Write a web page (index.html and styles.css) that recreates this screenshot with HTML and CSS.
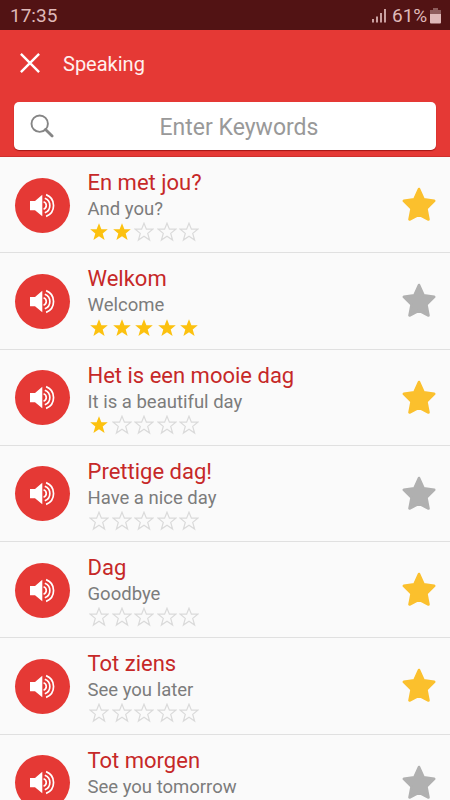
FILE: index.html
```html
<!DOCTYPE html>
<html lang="nl">
<head>
<meta charset="utf-8">
<title>Speaking</title>
<link rel="stylesheet" href="styles.css">
</head>
<body>
<svg class="defs" aria-hidden="true">
  <symbol id="speaker" viewBox="0 0 55 55">
    <path d="M15 23h5l7.3-6.2v21.4L20 32.3h-5z" fill="#fff"/>
    <g fill="none" stroke="#fff" stroke-width="1.7">
      <path d="M28.6 23.8a3.9 3.9 0 0 1 0 7.4"/>
      <path d="M29.8 20.2a7.8 7.8 0 0 1 0 14.6"/>
      <path d="M31.1 16.6a11.7 11.7 0 0 1 0 21.8"/>
    </g>
  </symbol>
  <symbol id="star" viewBox="0 0 20 20">
    <path d="M10 1.2l2.4 6h6.4l-5.1 4.2 1.9 6.7L10 14.2l-5.6 3.9 1.9-6.7L1.2 7.2h6.4z"/>
  </symbol>
  <symbol id="fav" viewBox="0 0 36 36">
    <path d="M18 3l4.6 10.4 10.6 1.4-7.8 7.7 2.1 11L18 28.5l-9.5 5 2.1-11-7.8-7.7 10.6-1.4z" stroke="currentColor" stroke-width="2.6" stroke-linejoin="round" fill="currentColor"/>
  </symbol>
</svg>
<div class="status">
  <span class="time">17:35</span>
  <svg class="signal" viewBox="0 0 15 15"><path d="M1 11v3.5M5 8.5v6M9 5v9.5M13 1v13.5" stroke="currentColor" stroke-width="1.7"/></svg>
  <span class="percent">61%</span>
  <svg class="battery" viewBox="0 0 11 16"><path d="M3 0h5v2h3v4H0V2h3z" fill="#8d5c5c"/><path d="M0 6h11v8.5a1 1 0 0 1-1 1H1a1 1 0 0 1-1-1z" fill="currentColor"/></svg>
</div>
<header class="header">
  <div class="bar">
    <svg class="close" viewBox="0 0 20 20"><path d="M.9.9l18.2 18.2M19.1.9L.9 19.1" stroke="#fff" stroke-width="2.4"/></svg>
    <h1>Speaking</h1>
  </div>
  <div class="search">
    <svg class="lens" viewBox="0 0 24 24"><circle cx="9.7" cy="9.7" r="8.2" fill="none" stroke="#858585" stroke-width="1.9"/><path d="M15.5 15.5l6.6 6.6" stroke="#858585" stroke-width="2.8" stroke-linecap="round"/></svg>
    <span class="placeholder">Enter Keywords</span>
  </div>
</header>
<main class="list" id="list"></main>
<script src="app.js"></script>
</body>
</html>
```
FILE: styles.css
```css
* { box-sizing: border-box; }
body {
  margin: 0;
  width: 450px;
  height: 800px;
  overflow: hidden;
  background: #fafafa;
  font-family: Roboto, "Liberation Sans", sans-serif;
}
svg { display: block; flex: none; }
.defs { position: absolute; width: 0; height: 0; }
.status {
  display: flex;
  align-items: center;
  height: 30px;
  padding: 1px 9px 0 10px;
  background: #521314;
  color: #dfb9b9;
}
.time { font-size: 19px; flex: 1; }
.signal { width: 15px; height: 15px; margin-right: 5px; }
.percent { font-size: 19px; width: 38px; }
.battery { width: 11px; height: 16px; }
.header {
  height: 127px;
  padding: 0 14px;
  background: #e53935;
  border-bottom: 1px solid #cf302e;
}
.bar { display: flex; align-items: center; height: 72px; padding: 0 0 7px 6px; }
.close { width: 20px; height: 20px; }
h1 { margin: 2px 0 0 23px; font-size: 20px; font-weight: 400; color: #fff0ef; }
.search {
  display: flex;
  align-items: center;
  height: 48px;
  padding-left: 16px;
  border-radius: 5px;
  background: #fff;
  box-shadow: 0 1px 1px rgba(120, 0, 0, .6);
}
.lens { width: 24px; height: 24px; }
.placeholder { flex: 1; margin: 2px 13px 0 0; padding-left: 1px; text-align: center; font-size: 23px; color: #999; }
.row {
  display: flex;
  height: 96.3px;
  padding: 0 15px;
  border-bottom: 1px solid #e0e0e0;
}
.play { width: 55px; height: 55px; margin-top: 20.5px; border-radius: 50%; background: #e53935; }
.play svg { width: 55px; height: 55px; }
.text { flex: 1; padding: 12px 0 0 17.5px; white-space: nowrap; }
.title { font-size: 22px; line-height: 28px; color: #c62828; }
.sub { font-size: 18.5px; line-height: 25px; color: #7c7c7c; }
.stars { display: flex; gap: 2.5px; padding-left: 1.5px; }
.stars svg { width: 20px; height: 20px; fill: #fcc10f; }
.stars .empty { fill: none; stroke: #dadada; stroke-width: 1.2; }
.fav { width: 36px; height: 36px; margin: 29px -2px 0 0; color: #b0b0b0; }
.fav.on { color: #fbc02d; }
```
FILE: app.js
```javascript
const phrases = [
  ["En met jou?", "And you?", 2, true],
  ["Welkom", "Welcome", 5, false],
  ["Het is een mooie dag", "It is a beautiful day", 1, true],
  ["Prettige dag!", "Have a nice day", 0, false],
  ["Dag", "Goodbye", 0, true],
  ["Tot ziens", "See you later", 0, true],
  ["Tot morgen", "See you tomorrow", 0, false]
];
document.getElementById("list").innerHTML = phrases.map(([title, sub, rating, on]) => `
  <div class="row">
    <div class="play"><svg><use href="#speaker"/></svg></div>
    <div class="text">
      <div class="title">${title}</div>
      <div class="sub">${sub}</div>
      <div class="stars">${[0, 1, 2, 3, 4].map(i => `<svg class="${i < rating ? "full" : "empty"}"><use href="#star"/></svg>`).join("")}</div>
    </div>
    <svg class="fav ${on ? "on" : ""}"><use href="#fav"/></svg>
  </div>`).join("");
```
